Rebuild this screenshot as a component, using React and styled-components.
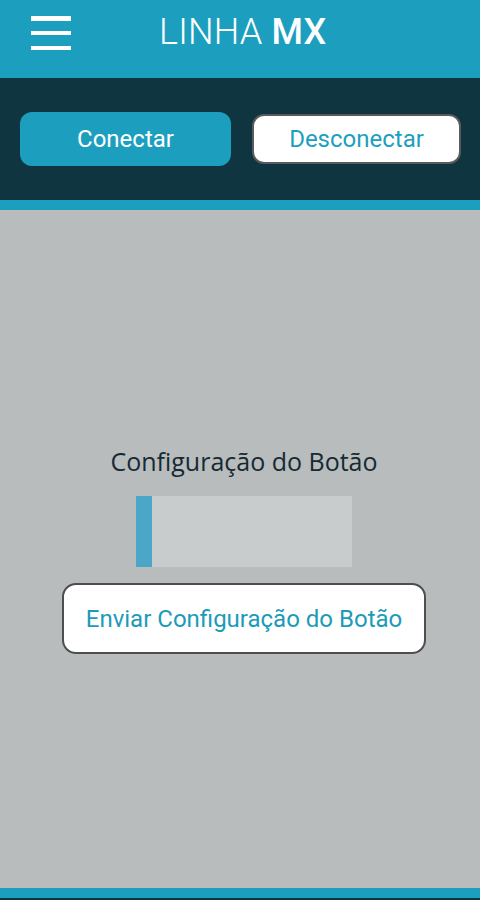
import React from 'react'
import styled, { createGlobalStyle } from 'styled-components'

const Global = createGlobalStyle`
  html, body { margin: 0; padding: 0; }
  body { background: #b8bcbc; font-family: Roboto, "Liberation Sans", sans-serif; }
`

const Screen = styled.div`
  width: 480px;
  height: 900px;
  display: flex;
  flex-direction: column;
  background: #b8bcbc;
  overflow: hidden;
`

const TopBar = styled.header`
  height: 78px;
  box-sizing: border-box;
  padding-top: 16px;
  background: #1c9fbe;
  display: flex;
  align-items: flex-start;
`

const Burger = styled.button`
  width: 40px;
  height: 34px;
  margin-left: 31px;
  padding: 0;
  border: 0;
  background: none;
  display: flex;
  flex-direction: column;
  justify-content: space-between;
  span {
    display: block;
    height: 4.5px;
    background: #fff;
  }
`

const Title = styled.h1`
  margin: -5px 0 0 88px;
  font-family: Roboto, "Liberation Sans", sans-serif;
  font-weight: 300;
  font-size: 36px;
  line-height: 42px;
  letter-spacing: 0.2px;
  color: #fff;
  b { font-weight: 500; }
`

const ConnBar = styled.div`
  height: 122px;
  background: #0f3540;
  display: flex;
  align-items: center;
  gap: 21px;
  padding: 0 19px 0 20px;
  border-bottom: 10px solid #1c9fbe;
`

const Pill = styled.button`
  width: ${p => (p.$solid ? '211px' : '209px')};
  height: ${p => (p.$solid ? '54px' : '50px')};
  border-radius: 12px;
  font-family: Roboto, "Liberation Sans", sans-serif;
  font-size: 24px;
  padding: 0;
  background: ${p => (p.$solid ? '#1c9fbe' : '#fff')};
  color: ${p => (p.$solid ? '#fff' : '#1c9fbe')};
  border: ${p => (p.$solid ? '0' : '2px solid #5a5a5a')};
`

const Body = styled.main`
  flex: 1;
  display: flex;
  flex-direction: column;
  align-items: center;
  padding-top: 234px;
`

const Label = styled.div`
  font-family: "Open Sans", sans-serif;
  font-size: 25px;
  color: #152a33;
  line-height: 34px;
  margin-left: 8px;
`

const Field = styled.div`
  width: 216px;
  height: 71px;
  margin-top: 18px;
  margin-left: 8px;
  background: #c9cccd;
  border-left: 16px solid #4aa7c7;
  box-sizing: border-box;
`

const SendButton = styled.button`
  margin-top: 16px;
  margin-left: 8px;
  width: 364px;
  height: 71px;
  background: #fff;
  border: 2px solid #4e4e4e;
  border-radius: 14px;
  font-family: Roboto, "Liberation Sans", sans-serif;
  font-size: 24px;
  color: #1c9bb8;
  padding: 0;
`

const Footer = styled.footer`
  height: 10px;
  background: #1c9fbe;
  border-bottom: 2px solid #0f3540;
`

export default function App() {
  return (
    <>
      <Global />
      <Screen>
        <TopBar>
          <Burger aria-label="menu"><span /><span /><span /></Burger>
          <Title>LINHA <b>MX</b></Title>
        </TopBar>
        <ConnBar>
          <Pill $solid>Conectar</Pill>
          <Pill>Desconectar</Pill>
        </ConnBar>
        <Body>
          <Label>Configuração do Botão</Label>
          <Field />
          <SendButton>Enviar Configuração do Botão</SendButton>
        </Body>
        <Footer />
      </Screen>
    </>
  )
}
